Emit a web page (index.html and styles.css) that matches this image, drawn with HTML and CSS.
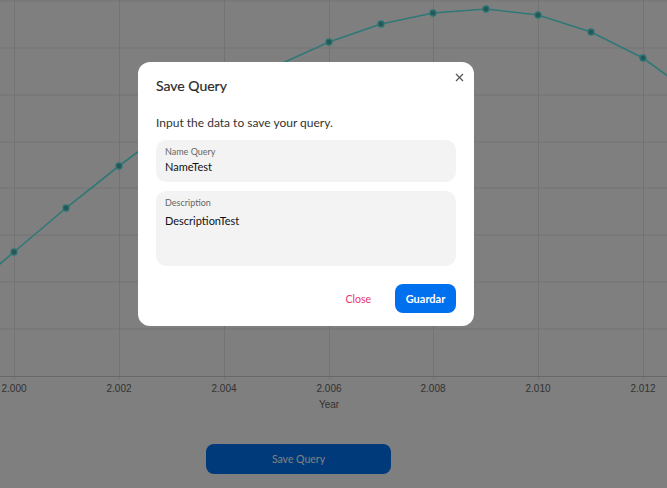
FILE: index.html
```html
<!DOCTYPE html>
<html lang="en">
<head>
<meta charset="utf-8">
<title>Save Query</title>
<link rel="stylesheet" href="styles.css">
</head>
<body>
<main class="page">
  <figure class="chart">
    <svg class="chart-svg" width="667" height="420" viewBox="0 0 667 420">
      <g class="grid">
        <line x1="0" y1="1" x2="667" y2="1"/>
        <line x1="0" y1="48" x2="667" y2="48"/>
        <line x1="0" y1="95" x2="667" y2="95"/>
        <line x1="0" y1="142" x2="667" y2="142"/>
        <line x1="0" y1="188" x2="667" y2="188"/>
        <line x1="0" y1="235" x2="667" y2="235"/>
        <line x1="0" y1="282" x2="667" y2="282"/>
        <line x1="0" y1="329" x2="667" y2="329"/>
        <line x1="14.5" y1="0" x2="14.5" y2="380"/>
        <line x1="119.5" y1="0" x2="119.5" y2="380"/>
        <line x1="224.5" y1="0" x2="224.5" y2="380"/>
        <line x1="329.5" y1="0" x2="329.5" y2="380"/>
        <line x1="433.5" y1="0" x2="433.5" y2="380"/>
        <line x1="538.5" y1="0" x2="538.5" y2="380"/>
        <line x1="643.5" y1="0" x2="643.5" y2="380"/>
      </g>
      <line class="axis" x1="0" y1="376.5" x2="667" y2="376.5"/>
      <g class="ticks">
        <text x="14" y="392">2.000</text>
        <text x="119" y="392">2.002</text>
        <text x="224" y="392">2.004</text>
        <text x="329" y="392">2.006</text>
        <text x="433" y="392">2.008</text>
        <text x="538" y="392">2.010</text>
        <text x="643" y="392">2.012</text>
        <text x="329" y="408">Year</text>
      </g>
      <polyline class="series" points="-38,296 14,252 66,208 119,166 171,127 224,95 276,66 329,42 381,24 433,13 486,9 538,15 591,32 643,58 695,96"/>
      <g class="points">
        <circle cx="14" cy="252" r="3"/>
        <circle cx="66" cy="208" r="3"/>
        <circle cx="119" cy="166" r="3"/>
        <circle cx="171" cy="127" r="3"/>
        <circle cx="224" cy="95" r="3"/>
        <circle cx="276" cy="66" r="3"/>
        <circle cx="329" cy="42" r="3"/>
        <circle cx="381" cy="24" r="3"/>
        <circle cx="433" cy="13" r="3"/>
        <circle cx="486" cy="9" r="3"/>
        <circle cx="538" cy="15" r="3"/>
        <circle cx="591" cy="32" r="3"/>
        <circle cx="643" cy="58" r="3"/>
      </g>
    </svg>
  </figure>
  <div class="actions">
    <button class="save-btn" type="button">Save Query</button>
  </div>
</main>

<div class="overlay">
  <section class="modal" role="dialog" aria-labelledby="modal-title">
    <header class="modal-header">
      <h2 id="modal-title" class="modal-title">Save Query</h2>
      <button class="close-x" type="button" aria-label="Close">
        <svg width="9" height="9" viewBox="0 0 9 9"><path d="M1 1 L8 8 M8 1 L1 8"/></svg>
      </button>
    </header>
    <div class="modal-body">
      <p class="intro">Input the data to save your query.</p>
      <label class="field">
        <span class="field-label">Name Query</span>
        <span class="field-value">NameTest</span>
      </label>
      <label class="field field-area">
        <span class="field-label">Description</span>
        <span class="field-value">DescriptionTest</span>
      </label>
    </div>
    <footer class="modal-footer">
      <button class="btn-close" type="button">Close</button>
      <button class="btn-primary" type="button">Guardar</button>
    </footer>
  </section>
</div>
</body>
</html>
```

FILE: styles.css
```css
* { box-sizing: border-box; }

html, body {
  margin: 0;
  padding: 0;
  background: #ffffff;
}

body {
  font-family: "Lato", "Noto Sans", sans-serif;
  width: 667px;
  height: 488px;
  overflow: hidden;
}

.page {
  width: 667px;
}

.chart {
  margin: 0;
  height: 420px;
}

.chart-svg {
  display: block;
}

.grid line {
  stroke: #e6e6e6;
  stroke-width: 1;
}

.axis {
  stroke: #d0d0d0;
  stroke-width: 1;
}

.ticks text {
  font-family: "Liberation Sans", Arial, sans-serif;
  font-size: 10px;
  fill: #666666;
  text-anchor: middle;
}

.series {
  fill: none;
  stroke: #5cf0ee;
  stroke-width: 1.6;
}

.points circle {
  fill: #48aeac;
  stroke: #58e6e4;
  stroke-width: 1.3;
}

.actions {
  padding: 24px 0 0 206px;
}

.save-btn {
  width: 185px;
  height: 30px;
  border: none;
  border-radius: 8px;
  background: #0074f4;
  color: #ffffff;
  font-family: inherit;
  font-size: 10.5px;
}

.overlay {
  position: fixed;
  inset: 0;
  background: rgba(0, 0, 0, 0.5);
  padding: 62px 0 0 138px;
}

.modal {
  width: 336px;
  height: 264px;
  background: #ffffff;
  border-radius: 12px;
  padding: 14px 18px 13px 18px;
  display: flex;
  flex-direction: column;
}

.modal-header {
  display: flex;
  justify-content: space-between;
  align-items: flex-start;
  height: 39px;
}

.modal-title {
  margin: 0;
  padding-top: 1px;
  font-size: 14px;
  font-weight: 400;
  color: #2a2a2a;
  line-height: 18px;
  -webkit-text-stroke: 0.2px #2a2a2a;
}

.close-x {
  border: none;
  background: none;
  padding: 0;
  margin: -3px -8px 0 0;
  width: 9px;
  height: 9px;
  display: flex;
}

.close-x path {
  stroke: #555555;
  stroke-width: 1.2;
  fill: none;
}

.modal-body {
  display: flex;
  flex-direction: column;
  gap: 9px;
}

.intro {
  margin: 0 0 0 0;
  font-size: 12px;
  color: #333333;
  line-height: 16px;
}

.field {
  display: flex;
  flex-direction: column;
  background: #f3f3f3;
  border-radius: 10px;
  padding: 6px 9px;
  height: 42px;
}

.field-area {
  height: 75px;
}

.field-label {
  font-size: 9px;
  color: #666666;
  line-height: 12px;
}

.field-value {
  font-size: 11px;
  color: #111111;
  line-height: 16px;
  margin-top: 1px;
}

.field-area .field-value {
  margin-top: 4px;
}

.modal-footer {
  margin-top: auto;
  display: flex;
  justify-content: flex-end;
  align-items: center;
  gap: 24px;
}

.btn-close {
  border: none;
  background: none;
  padding: 0;
  font-family: inherit;
  font-size: 10.5px;
  color: #e8336b;
}

.btn-primary {
  width: 61px;
  height: 29px;
  border: none;
  border-radius: 8px;
  background: #0070ee;
  color: #ffffff;
  font-family: inherit;
  font-size: 11px;
  font-weight: 700;
}
```
